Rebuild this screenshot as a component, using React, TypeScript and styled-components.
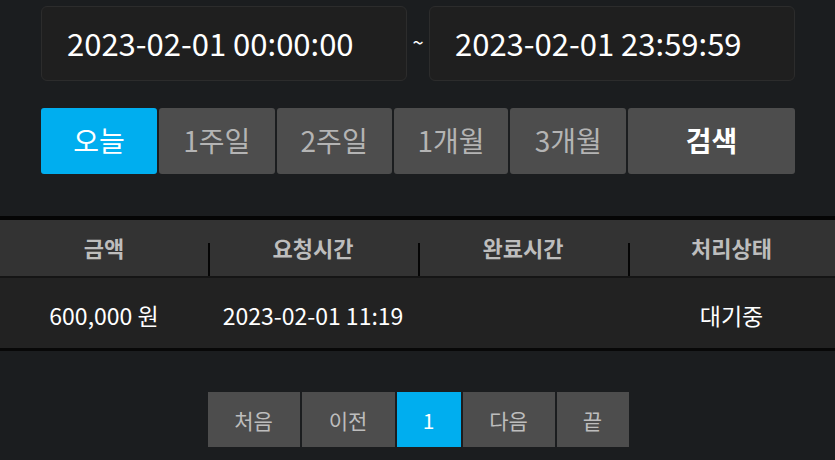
import React from "react";
import styled, { createGlobalStyle } from "styled-components";

const Global = createGlobalStyle`
  html, body { margin: 0; padding: 0; background: #1b1d1f; }
  body { font-family: "Noto Sans CJK KR", "Noto Sans", sans-serif; }
  * { box-sizing: border-box; }
`;

const Page = styled.div`
  width: 835px;
  height: 460px;
  background: #1b1d1f;
  display: flex;
  flex-direction: column;
  overflow: hidden;
`;

const DateRow = styled.div`
  display: flex;
  align-items: center;
  padding: 6px 40px 0 41px;
`;

const DateBox = styled.div`
  width: 366px;
  height: 75px;
  background: #1f1f1f;
  border: 1px solid #2c2c2c;
  border-radius: 6px;
  display: flex;
  align-items: center;
  padding-left: 25px;
  padding-bottom: 3px;
  color: #ffffff;
  font-size: 31px;
`;

const Tilde = styled.div`
  width: 22px;
  text-align: center;
  color: #ffffff;
  font-size: 20px;
  margin-top: -4px;
`;

const ButtonRow = styled.div`
  display: flex;
  gap: 2px;
  padding: 0 40px 0 41px;
  margin-top: 27px;
`;

const RangeButton = styled.div<{ $w: number; $active?: boolean; $strong?: boolean }>`
  width: ${(p) => p.$w}px;
  height: 66px;
  border-radius: 3px;
  background: ${(p) => (p.$active ? "#00aeef" : "#4d4d4d")};
  color: ${(p) => (p.$active || p.$strong ? "#ffffff" : "#b4b4b4")};
  font-weight: ${(p) => (p.$strong ? 700 : 400)};
  font-size: 28px;
  display: flex;
  align-items: center;
  justify-content: center;
  padding-bottom: 2px;
`;

const Table = styled.div`
  margin-top: 42px;
  border-top: 4px solid #050505;
  border-bottom: 3px solid #080808;
  display: flex;
  flex-direction: column;
`;

const HeaderRow = styled.div`
  display: grid;
  grid-template-columns: 208px 210px 210px 1fr;
  height: 58px;
  background: #333333;
  border-bottom: 2px solid #151515;
`;

const HeaderCell = styled.div<{ $sep?: boolean }>`
  position: relative;
  display: flex;
  align-items: center;
  justify-content: center;
  color: #bdbdbd;
  font-size: 22px;
  font-weight: 700;
  padding-bottom: 2px;
  &::before {
    content: "";
    display: ${(p) => (p.$sep ? "block" : "none")};
    position: absolute;
    left: 0;
    bottom: 0;
    width: 2px;
    height: 33px;
    background: #050505;
  }
`;

const DataRow = styled.div`
  display: grid;
  grid-template-columns: 208px 210px 210px 1fr;
  height: 70px;
  background: #222222;
`;

const DataCell = styled.div`
  display: flex;
  align-items: center;
  justify-content: center;
  color: #ffffff;
  font-size: 23px;
  padding-top: 4px;
`;

const Pager = styled.div`
  display: flex;
  justify-content: center;
  gap: 2px;
  margin-top: 41px;
  padding-left: 1px;
`;

const PageButton = styled.div<{ $w: number; $active?: boolean }>`
  width: ${(p) => p.$w}px;
  height: 55px;
  background: ${(p) => (p.$active ? "#00aeef" : "#4d4d4d")};
  color: ${(p) => (p.$active ? "#ffffff" : "#bdbdbd")};
  font-size: 21px;
  display: flex;
  align-items: center;
  justify-content: center;
`;

const ranges = [
  { label: "오늘", w: 116, active: true },
  { label: "1주일", w: 116 },
  { label: "2주일", w: 115 },
  { label: "1개월", w: 115 },
  { label: "3개월", w: 116 },
];

const pages = [
  { label: "처음", w: 92 },
  { label: "이전", w: 93 },
  { label: "1", w: 64, active: true },
  { label: "다음", w: 92 },
  { label: "끝", w: 72 },
];

export default function App() {
  return (
    <Page>
      <Global />
      <DateRow>
        <DateBox>2023-02-01 00:00:00</DateBox>
        <Tilde>~</Tilde>
        <DateBox>2023-02-01 23:59:59</DateBox>
      </DateRow>
      <ButtonRow>
        {ranges.map((r) => (
          <RangeButton key={r.label} $w={r.w} $active={r.active}>
            {r.label}
          </RangeButton>
        ))}
        <RangeButton $w={167} $strong>
          검색
        </RangeButton>
      </ButtonRow>
      <Table>
        <HeaderRow>
          <HeaderCell>금액</HeaderCell>
          <HeaderCell $sep>요청시간</HeaderCell>
          <HeaderCell $sep>완료시간</HeaderCell>
          <HeaderCell $sep>처리상태</HeaderCell>
        </HeaderRow>
        <DataRow>
          <DataCell>600,000 원</DataCell>
          <DataCell>2023-02-01 11:19</DataCell>
          <DataCell></DataCell>
          <DataCell>대기중</DataCell>
        </DataRow>
      </Table>
      <Pager>
        {pages.map((p) => (
          <PageButton key={p.label} $w={p.w} $active={p.active}>
            {p.label}
          </PageButton>
        ))}
      </Pager>
    </Page>
  );
}
